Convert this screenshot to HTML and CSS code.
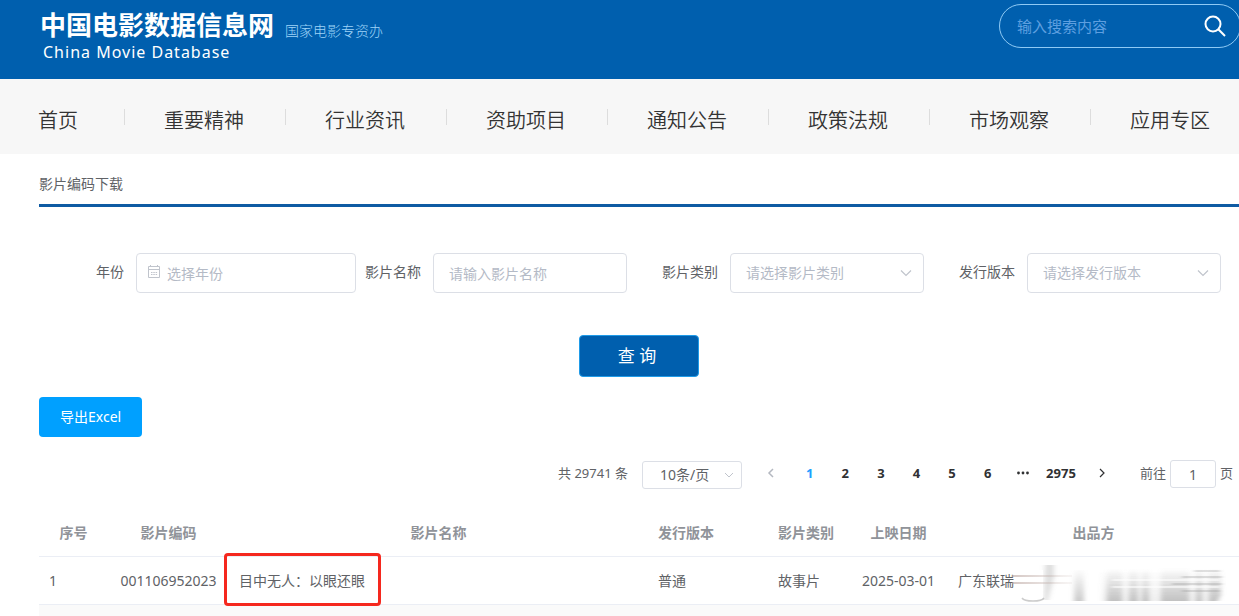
FILE: index.html
```html
<!DOCTYPE html>
<html lang="zh-CN">
<head>
<meta charset="utf-8">
<title>影片编码下载</title>
<link rel="stylesheet" href="styles.css">
</head>
<body>
<header class="site-header">
  <div class="brand">
    <div class="brand-names">
      <h1 class="brand-title">中国电影数据信息网</h1>
      <p class="brand-sub">China Movie Database</p>
    </div>
    <p class="brand-office">国家电影专资办</p>
  </div>
  <form class="search">
    <input class="search-input" type="text" aria-label="搜索" placeholder="输入搜索内容">
    <button class="search-button" type="button" aria-label="搜索">
      <svg width="22" height="22" viewBox="0 0 22 22" fill="none" stroke="#fff" stroke-width="2"><circle cx="9" cy="9" r="7.5"/><path d="M14.3 14.3 21 21"/></svg>
    </button>
  </form>
</header>

<nav class="nav">
  <a class="nav-link nav-home" href="#">首页</a>
  <a class="nav-link" href="#">重要精神</a>
  <a class="nav-link" href="#">行业资讯</a>
  <a class="nav-link" href="#">资助项目</a>
  <a class="nav-link" href="#">通知公告</a>
  <a class="nav-link" href="#">政策法规</a>
  <a class="nav-link" href="#">市场观察</a>
  <a class="nav-link" href="#">应用专区</a>
</nav>

<main class="page">
  <h2 class="page-title">影片编码下载</h2>

  <form class="filters">
    <div class="filter-grid">
      <div class="field">
        <label class="field-label" for="year">年份</label>
        <div class="control control-date">
          <svg class="icon-date" width="14" height="14" viewBox="0 0 14 14" fill="none" stroke="#c0c4cc"><path d="M1.500 1.500h11v11h-11zM1.500 4.500h11M3.500 0v2M10.500 0v2M4 7.500h1.500M6.300 7.500h1.500M8.600 7.500h1.500M4 9.500h1.500M6.300 9.500h1.500M8.600 9.500h1.500"/></svg>
          <input class="box box-date" id="year" type="text" placeholder="选择年份">
        </div>
      </div>
      <div class="field">
        <label class="field-label" for="name">影片名称</label>
        <div class="control"><input class="box" id="name" type="text" placeholder="请输入影片名称"></div>
      </div>
      <div class="field">
        <label class="field-label" for="type">影片类别</label>
        <div class="control">
          <select class="box box-select" id="type"><option>请选择影片类别</option></select>
          <svg class="icon-arrow" width="12" height="8" viewBox="0 0 12 8" fill="none" stroke="#c0c4cc" stroke-width="1.200"><path d="M1 1.500 6 6.500l5-5"/></svg>
        </div>
      </div>
      <div class="field">
        <label class="field-label" for="version">发行版本</label>
        <div class="control">
          <select class="box box-select" id="version"><option>请选择发行版本</option></select>
          <svg class="icon-arrow" width="12" height="8" viewBox="0 0 12 8" fill="none" stroke="#c0c4cc" stroke-width="1.200"><path d="M1 1.500 6 6.500l5-5"/></svg>
        </div>
      </div>
    </div>
    <button class="query" type="button">查 询</button>
  </form>

  <button class="export" type="button">导出Excel</button>

  <div class="pager">
    <span class="total">共 29741 条</span>
    <div class="control control-size">
      <select class="box box-size" aria-label="每页条数"><option>10条/页</option></select>
      <svg class="icon-arrow icon-arrow-size" width="10" height="7" viewBox="0 0 10 7" fill="none" stroke="#c0c4cc"><path d="M1 1l4 4 4-4"/></svg>
    </div>
    <button class="step" type="button" aria-label="上一页" disabled>
      <svg width="8" height="10" viewBox="0 0 8 10" fill="none" stroke="#b4b8c0" stroke-width="1.500"><path d="M6 1 2 5l4 4"/></svg>
    </button>
    <div class="pages">
      <button class="num num-active" type="button">1</button>
      <button class="num" type="button">2</button>
      <button class="num" type="button">3</button>
      <button class="num" type="button">4</button>
      <button class="num" type="button">5</button>
      <button class="num" type="button">6</button>
      <button class="num" type="button" aria-label="更多">
        <svg width="12" height="4" viewBox="0 0 12 4" fill="#303133"><circle cx="1.500" cy="2" r="1.400"/><circle cx="6" cy="2" r="1.400"/><circle cx="10.500" cy="2" r="1.400"/></svg>
      </button>
    </div>
    <button class="num num-last" type="button">2975</button>
    <button class="step" type="button" aria-label="下一页">
      <svg width="8" height="10" viewBox="0 0 8 10" fill="none" stroke="#303133" stroke-width="1.200"><path d="M2 1l4 4-4 4"/></svg>
    </button>
    <label class="jump">前往<input class="box box-jump" type="text" value="1">页</label>
  </div>

  <table class="films">
    <colgroup><col class="c-index"><col class="c-code"><col><col class="c-version"><col class="c-type"><col class="c-date"><col class="c-maker"></colgroup>
    <thead>
      <tr><th>序号</th><th>影片编码</th><th>影片名称</th><th class="left">发行版本</th><th class="left">影片类别</th><th>上映日期</th><th>出品方</th></tr>
    </thead>
    <tbody>
      <tr>
        <td>1</td>
        <td class="center">001106952023</td>
        <td class="name-cell">目中无人：以眼还眼<span class="highlight"></span></td>
        <td>普通</td>
        <td>故事片</td>
        <td class="center">2025-03-01</td>
        <td class="maker-cell">广东联瑞
          <svg class="smudge" width="216" height="44" viewBox="0 0 216 44">
            <defs>
              <filter id="soft" x="-10%" y="-20%" width="120%" height="140%"><feGaussianBlur stdDeviation="2.500 0.500"/></filter>
              <filter id="line" x="-10%" y="-20%" width="120%" height="140%"><feGaussianBlur stdDeviation="2 0.600"/></filter>
              <linearGradient id="fade" x1="0" y1="4" x2="0" y2="38" gradientUnits="userSpaceOnUse"><stop offset="0" stop-color="#888" stop-opacity="0"/><stop offset="1" stop-color="#888" stop-opacity="0.450"/></linearGradient>
              <linearGradient id="warm" x1="0" y1="0" x2="60" y2="0" gradientUnits="userSpaceOnUse"><stop offset="0" stop-color="#b9a39d" stop-opacity="0.600"/><stop offset="1" stop-color="#b9a39d" stop-opacity="0.100"/></linearGradient>
            </defs>
            <g filter="url(#soft)" fill="url(#fade)">
              <path d="M62 6h10v31H62zM95 5h15v32H95zM117 5h9v32h-9zM130 5h7v32h-7zM149 4h28v33h-28zM184 5h6v32h-6zM197 5h12v26l-4 6h-8z"/>
              <path d="M90 8h118v29H90z" opacity="0.300"/>
              <path d="M33 1h9v12l-6 23h-4z" fill="#888" fill-opacity="0.280"/>
            </g>
            <path d="M100 16h108M100 23h108" stroke="#fff" stroke-width="2" opacity="0.600" filter="url(#line)"/>
            <path d="M170 13h40M160 20h50M170 27h38M182 7h26" stroke="#888" stroke-width="1.500" opacity="0.350" filter="url(#line)"/>
            <path d="M11 6v28q2 3 10 3t10-3V6z" fill="#fff" opacity="0.900"/>
            <path d="M10 34q2 3 11 3t11-3" fill="none" stroke="#aaa" stroke-width="1.500" opacity="0.600"/>
            <path d="M0 11h60v2H0zM0 18h60v2H0z" fill="url(#warm)"/>
          </svg>
        </td>
      </tr>
      <tr class="stripe"><td></td><td></td><td></td><td></td><td></td><td></td><td></td></tr>
    </tbody>
  </table>
</main>
</body>
</html>
```

FILE: styles.css
```css
* { box-sizing: border-box; }

body {
  margin: 0;
  overflow-x: hidden;
  background: #fff;
  color: #606266;
  font: 14px/22px "Noto Sans", "Noto Sans CJK SC", sans-serif;
}

h1, h2, p { margin: 0; font-weight: 400; }

button, input, select { margin: 0; font: inherit; color: inherit; }

button { padding: 0; border: 0; background: none; cursor: pointer; }

.site-header {
  display: flex;
  justify-content: space-between;
  align-items: flex-start;
  height: 79px;
  padding-left: 40px;
  background: #005fae;
  color: #fff;
}

.brand { display: flex; gap: 11px; padding-top: 9px; }

.brand-title { font-size: 26px; line-height: 33px; font-weight: 700; }

.brand-sub { padding-left: 3px; font-size: 16px; line-height: 20px; letter-spacing: 1px; }

.brand-office {
  padding-top: 11px;
  color: #9fd4f8;
  font-weight: 300;
}

.search {
  display: flex;
  align-items: center;
  width: 242px;
  height: 44px;
  margin: 4px -2px 0 0;
  padding: 0 14px 0 17px;
  border: 1px solid #8fcaf5;
  border-radius: 22px;
}

.search-input {
  flex: 1;
  min-width: 0;
  padding: 0;
  border: 0;
  outline: 0;
  background: none;
  font-size: 15px;
}

.search-input::placeholder { color: #5e9fe0; opacity: 1; }

.search-button { display: flex; }

.nav {
  display: flex;
  height: 75px;
  padding: 30px 0 0 38px;
  background: #f7f7f7;
}

.nav-link {
  display: flex;
  flex: none;
  color: #333;
  font-size: 20px;
  line-height: 24px;
  font-weight: 350;
  text-decoration: none;
  white-space: nowrap;
}

.nav-home { min-width: 46px; }

.nav-link + .nav-link { padding-right: 1px; }

.nav-link + .nav-link::before {
  content: "";
  width: 1px;
  height: 16px;
  margin: 0 39px 0 40px;
  background: #ddd;
}

.page { padding-left: 39px; }

.page-title {
  padding: 19px 0 9px;
  border-bottom: 3px solid #0f5ba3;
  font-size: 14px;
  line-height: 22px;
}

.filters {
  display: flex;
  flex-direction: column;
  align-items: center;
  gap: 42px;
  padding-top: 46px;
}

.filter-grid {
  display: grid;
  grid-template-columns: repeat(4, minmax(0, 1fr));
  width: 100%;
  padding-right: 12px;
}

.field { display: flex; padding-right: 6px; }

.field-label {
  flex: none;
  width: 97px;
  padding-right: 12px;
  line-height: 38px;
  text-align: right;
}

.control { position: relative; flex: 1; min-width: 0; }

.control-date { flex: none; width: 220px; }

.box {
  width: 100%;
  height: 40px;
  padding: 0 15px;
  border: 1px solid #dcdfe6;
  border-radius: 4px;
  outline: 0;
  appearance: none;
  background: #fff;
}

.box::placeholder { color: #b4bac6; opacity: 1; }

.box-date { padding-left: 30px; }

.box-select { color: #b4bac6; }

.icon-date { position: absolute; left: 11px; top: 12px; }

.icon-arrow { position: absolute; right: 12px; top: 16px; }

.query {
  width: 120px;
  height: 42px;
  padding-right: 4px;
  border: 1px solid #1f9be8;
  border-radius: 4px;
  background: #005fae;
  color: #fff;
  font-size: 17px;
}

.export {
  display: block;
  height: 40px;
  margin-top: 20px;
  padding: 0 21px;
  border-radius: 4px;
  background: #00a0ff;
  color: #fff;
}

.pager {
  display: flex;
  justify-content: flex-end;
  align-items: flex-start;
  margin-top: 23px;
  padding-right: 6px;
  color: #606266;
  font-size: 13px;
  line-height: 26px;
}

.control-size { flex: none; width: 100px; margin: 1px 8px 0 14px; }

.box-size { display: block; height: 28px; padding: 0 17px; font-size: 14px; border-radius: 3px; }

.icon-arrow-size { right: 8px; top: 11px; }

.step {
  display: flex;
  align-items: center;
  justify-content: center;
  width: 42px;
  height: 26px;
}

.pages { display: grid; grid-template-columns: repeat(7, 1fr); width: 249px; }

.num {
  display: flex;
  align-items: center;
  justify-content: center;
  height: 26px;
  color: #303133;
  font-weight: 700;
}

.num-active { color: #1e9fff; }

.num-last { width: 40px; }

.jump { display: flex; gap: 4px; margin-left: 17px; }

.box-jump {
  width: 46px;
  height: 28px;
  padding: 0;
  border-radius: 3px;
  font-size: 14px;
  text-align: center;
}

.films {
  width: 100%;
  margin-top: 20px;
  table-layout: fixed;
  border-collapse: separate;
  border-spacing: 0;
}

.films th, .films td {
  height: 48px;
  padding: 0 10px;
  border-bottom: 1px solid #ebeef5;
  text-align: left;
  white-space: nowrap;
}

.films th { color: #909399; font-weight: 700; text-align: center; }

.films th.left { text-align: left; }

.films td.center { padding: 0; text-align: center; }

.c-index { width: 69px; }
.c-code { width: 121px; }
.c-version { width: 120px; }
.c-type { width: 81px; }
.c-date { width: 99px; }
.c-maker { width: 291px; }

.name-cell, .maker-cell { position: relative; }

.highlight {
  position: absolute;
  left: -5px;
  top: -4px;
  width: 157px;
  height: 53px;
  border: 3px solid #f5281e;
  border-radius: 4px;
}

.smudge { position: absolute; left: 64px; top: 7px; }

.films .stripe td { height: 11px; border: 0; background: #fafafa; }
```
